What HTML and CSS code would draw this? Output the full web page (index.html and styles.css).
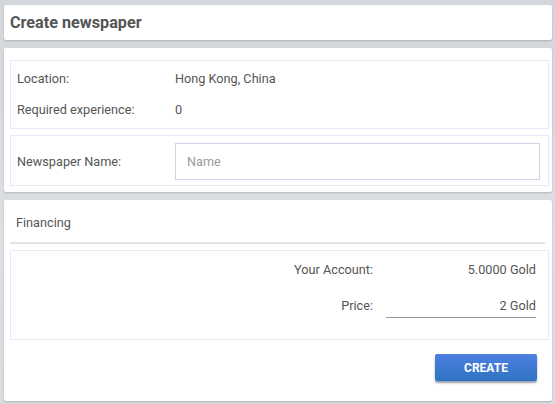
FILE: index.html
```html
<!DOCTYPE html>
<html lang="en">
<head>
    <meta charset="UTF-8">
    <meta name="viewport" content="width=device-width, initial-scale=1.0">
    <title>Create newspaper</title>
    <link rel="stylesheet" href="styles.css">
</head>
<body>
    <div class="panel header">
        <h1>Create newspaper</h1>
    </div>

    <div class="panel main">
        <div class="box info">
            <div class="row">
                <span class="label">Location:</span>
                <span class="value">Hong Kong, China</span>
            </div>
            <div class="row">
                <span class="label">Required experience:</span>
                <span class="value">0</span>
            </div>
        </div>
        <div class="box name-box">
            <div class="row">
                <label class="label" for="paper-name">Newspaper Name:</label>
                <input type="text" id="paper-name" placeholder="Name">
            </div>
        </div>
    </div>

    <div class="panel financing">
        <div class="section-title">Financing</div>
        <div class="box money">
            <div class="money-row">
                <span class="money-label">Your Account:</span>
                <span class="money-value">5.0000 Gold</span>
            </div>
            <div class="money-row price-row">
                <span class="money-label">Price:</span>
                <span class="money-value price">2 Gold</span>
            </div>
        </div>
        <div class="actions">
            <button class="btn">CREATE</button>
        </div>
    </div>
</body>
</html>
```

FILE: styles.css
```css
body {
    font-family: Roboto, "Liberation Sans", sans-serif;
    font-size: 12.7px;
    color: #555;
    background: linear-gradient(180deg, #d3d6db 0%, #dcdfe4 60%, #d8dbe0 100%);
    margin: 0;
    padding: 5px 3px 0 4px;
    height: 404px;
    box-sizing: border-box;
    overflow: hidden;
}
.panel {
    background: #fff;
    border-radius: 2px;
    box-shadow: 0 1px 2px rgba(0, 0, 0, 0.18);
}
.header {
    height: 35px;
    padding: 0 6px;
    display: flex;
    align-items: center;
    margin-bottom: 8px;
}
.header h1 {
    margin: 0;
    font-size: 16.2px;
    font-weight: bold;
    color: #555;
}
.main {
    height: 144px;
    box-sizing: border-box;
    padding: 12px 3px 0 6px;
    margin-bottom: 8px;
}
.box {
    border: 1px solid #e8ebf6;
}
.info {
    height: 69px;
    box-sizing: border-box;
    padding: 1.5px 6px 0 6px;
    margin-bottom: 6px;
}
.row {
    display: flex;
    align-items: center;
    height: 31px;
}
.label {
    width: 158px;
}
.name-box {
    height: 51px;
    box-sizing: border-box;
    padding: 7px 8px 0 6px;
}
.name-box .row {
    height: auto;
}
.name-box input {
    flex: 1;
    height: 37px;
    box-sizing: border-box;
    border: 1px solid #cdd4e8;
    padding: 0 11px;
    font-family: inherit;
    font-size: 12.7px;
    color: #555;
    outline: none;
}
.name-box input::placeholder {
    color: #9a9a9a;
}
.financing {
    height: 201px;
    box-sizing: border-box;
    padding: 0 3px 0 6px;
}
.section-title {
    height: 42px;
    line-height: 46px;
    padding-left: 6px;
    border-bottom: 2px solid #e4e4e4;
    margin-right: 4px;
    margin-bottom: 6px;
}
.money {
    height: 90px;
    box-sizing: border-box;
}
.money-row {
    display: flex;
    justify-content: flex-end;
    align-items: center;
    height: 36px;
    padding-right: 12px;
}
.price-row {
    align-items: flex-start;
    padding-top: 11px;
}
.money-label {
    text-align: right;
}
.money-value {
    width: 150px;
    margin-left: 13px;
    text-align: right;
}
.price {
    padding-bottom: 4px;
    border-bottom: 1px solid #9a9a9a;
}
.actions {
    display: flex;
    justify-content: flex-end;
    padding: 14px 12px 0 0;
}
.btn {
    width: 102px;
    height: 27px;
    border: none;
    border-radius: 2px;
    background: linear-gradient(180deg, #4e7fe2 0%, #2f74c2 100%);
    color: #fff;
    font-family: Roboto, "Liberation Sans", sans-serif;
    font-weight: bold;
    font-size: 12px;
    box-shadow: 0 2px 2px rgba(20, 40, 70, 0.45);
    cursor: pointer;
}
```
